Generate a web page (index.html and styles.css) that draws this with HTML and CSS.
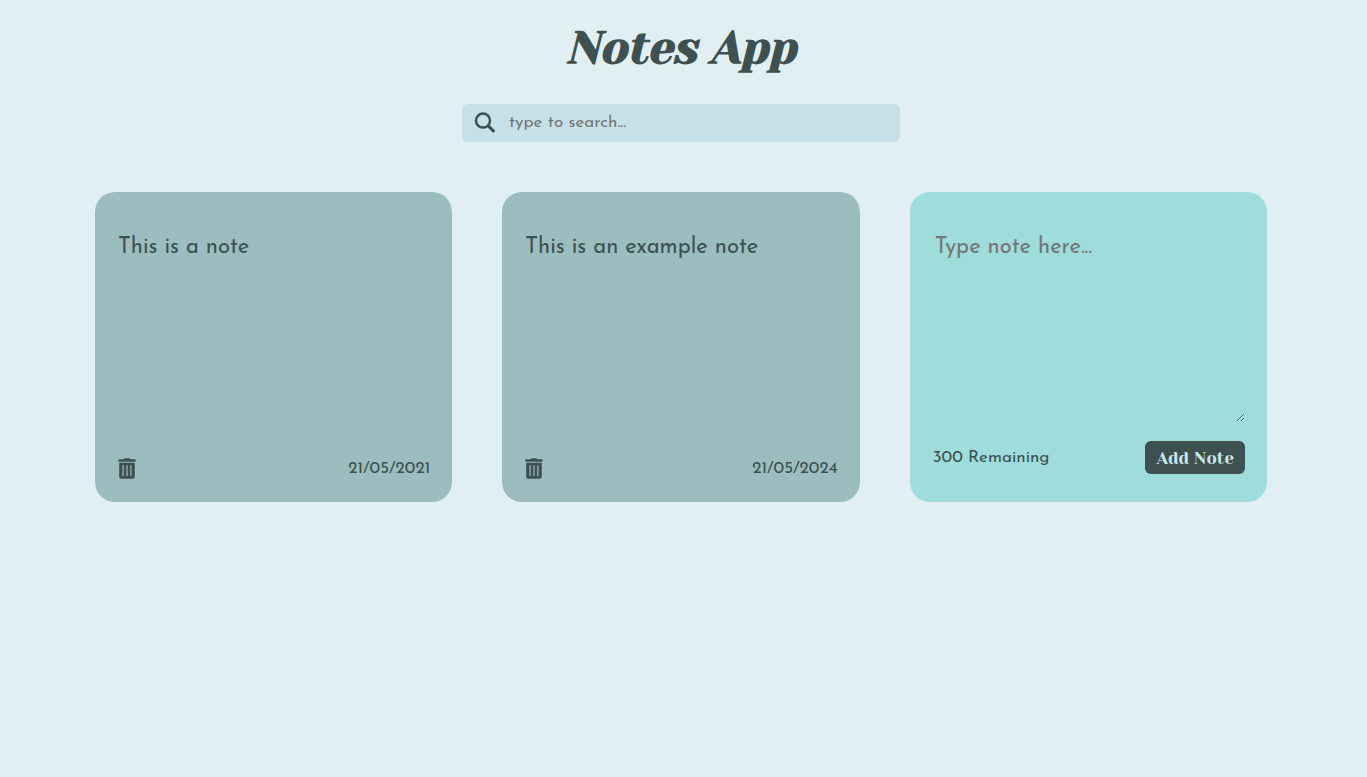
FILE: index.html
```html
<!DOCTYPE html>
<html lang="en">
<head>
<meta charset="utf-8">
<title>Notes App</title>
<link rel="stylesheet" href="styles.css">
</head>
<body>
<main class="container">
  <h1 class="title">Notes App</h1>
  <form class="search" role="search">
    <label class="search-label" for="search" aria-label="Search notes">
      <svg class="icon-search" viewBox="0 0 22 22" aria-hidden="true"><circle cx="9" cy="8.600" r="7" fill="none" stroke="currentColor" stroke-width="2.500"/><path d="M14 13.600l6.300 6.300" stroke="currentColor" stroke-width="2.900"/></svg>
    </label>
    <input class="search-input" id="search" type="text" placeholder="type to search...">
  </form>
  <section class="notes">
    <article class="note">
      <p class="note-text">This is a note</p>
      <footer class="note-footer">
        <button class="delete" type="button" aria-label="Delete note"><svg class="icon-trash" viewBox="0 0 18 22" aria-hidden="true"><path fill="currentColor" fill-rule="evenodd" d="M5.500 1.300Q6 .2 7 .2h4q1 0 1.500 1.100h4.100q1.200 0 1.200 1.200t-1.200 1.200H1.400Q.2 3.700.2 2.500t1.200-1.200zM1.200 4.700h15.600v13.500q0 2.600-2.600 2.600H3.800q-2.600 0-2.600-2.600zM4.500 7.300v10.800h1.200V7.300zM8.400 7.300v10.800h1.200V7.300zM12.300 7.300v10.800h1.200V7.300z"/></svg></button>
        <small class="date">21/05/2021</small>
      </footer>
    </article>
    <article class="note">
      <p class="note-text">This is an example note</p>
      <footer class="note-footer">
        <button class="delete" type="button" aria-label="Delete note"><svg class="icon-trash" viewBox="0 0 18 22" aria-hidden="true"><path fill="currentColor" fill-rule="evenodd" d="M5.500 1.300Q6 .2 7 .2h4q1 0 1.500 1.100h4.100q1.200 0 1.200 1.200t-1.200 1.200H1.400Q.2 3.700.2 2.500t1.200-1.200zM1.200 4.700h15.600v13.500q0 2.600-2.600 2.600H3.800q-2.600 0-2.600-2.600zM4.500 7.300v10.800h1.200V7.300zM8.400 7.300v10.800h1.200V7.300zM12.300 7.300v10.800h1.200V7.300z"/></svg></button>
        <small class="date">21/05/2024</small>
      </footer>
    </article>
    <form class="note note-new">
      <textarea class="note-input" aria-label="New note" placeholder="Type note here..."></textarea>
      <div class="new-footer">
        <small class="remaining">300 Remaining</small>
        <button class="add" type="button">Add Note</button>
      </div>
    </form>
  </section>
</main>
</body>
</html>
```
FILE: styles.css
```css
* { box-sizing: border-box; }
body { margin: 0; background: #e1eff3; color: #3e5050; font-family: "Josefin Sans", Lato, sans-serif; }
button, input, textarea { font: inherit; color: inherit; border: 0; }
.container { padding: 16px 100px 32px 95px; }
.title { margin: 0; text-align: center; font: italic 700 45px/64px "Yeseva One", "Liberation Serif", serif; }
.search { display: flex; align-items: center; width: 438px; max-width: 100%; height: 38px; margin: 24px auto 50px; padding-left: 12px; border-radius: 6px; background: #c5e0e7; }
.search-label { display: flex; }
.icon-search { width: 22px; height: 22px; }
.search-input { flex: 1; min-width: 0; padding: 0 13px; background: none; font-size: 17px; line-height: 24px; outline: 0; }
.search-input::placeholder, .note-input::placeholder { color: #757575; opacity: 1; }
.notes { display: grid; grid-template-columns: repeat(3, minmax(0, 1fr)); gap: 50px; }
.note { display: flex; flex-direction: column; justify-content: space-between; min-height: 310px; padding: 42px 22px 21px 23px; border-radius: 20px; background: #9bbdc0; }
.note-text { margin: 0; font-size: 22px; line-height: 28px; }
.note-footer, .new-footer { display: flex; align-items: center; justify-content: space-between; }
.delete { display: flex; padding: 0; background: none; cursor: pointer; }
.icon-trash { width: 18px; height: 22px; }
.date, .remaining { font-size: 17px; line-height: 24px; }
.note-new { padding-bottom: 28px; background: #9fdddc; }
.note-input { display: block; width: 100%; height: 188px; padding: 0 2px; background: none; font-size: 22px; line-height: 28px; outline: 0; resize: vertical; }
.add { height: 33px; padding: 0 11px; border-radius: 6px; background: #3e5050; color: #c5e8f0; font: 400 17px/24px "Yeseva One", "Liberation Serif", serif; cursor: pointer; }
```
